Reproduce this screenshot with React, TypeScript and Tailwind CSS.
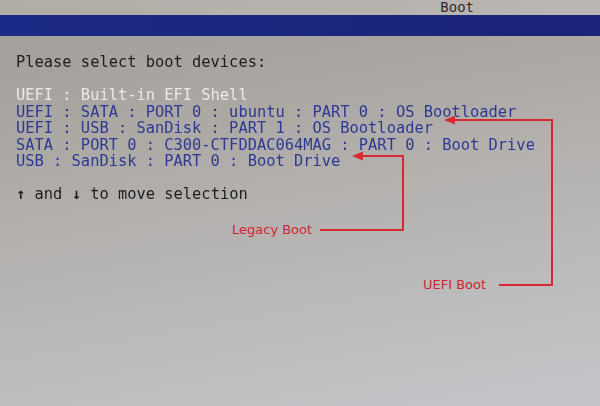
import React from 'react';

const mono = { fontFamily: '"DejaVu Sans Mono", "Liberation Mono", monospace' };

type Entry = { text: string; tone: 'white' | 'blue' };

const entries: Entry[] = [
  { text: 'UEFI : Built-in EFI Shell', tone: 'white' },
  { text: 'UEFI : SATA : PORT 0 : ubuntu : PART 0 : OS Bootloader', tone: 'blue' },
  { text: 'UEFI : USB : SanDisk : PART 1 : OS Bootloader', tone: 'blue' },
  { text: 'SATA : PORT 0 : C300-CTFDDAC064MAG : PART 0 : Boot Drive', tone: 'blue' },
  { text: 'USB : SanDisk : PART 0 : Boot Drive', tone: 'blue' },
];

function Callouts() {
  return (
    <>
      <svg className="absolute inset-0 pointer-events-none" width={600} height={406}>
        <g stroke="#d62a30" strokeWidth={2} fill="none">
          <polyline points="499,285 552,285 552,120 454,120" />
          <polyline points="320,230 403,230 403,156 362,156" />
        </g>
        <g fill="#d62a30">
          <polygon points="444,120 455,115.5 455,124.5" />
          <polygon points="352,156 363,151.5 363,160.5" />
        </g>
      </svg>
      <span
        className="absolute left-[232px] top-[221px] text-[13px] leading-[18px] text-[#d0262e]"
        style={{ fontFamily: '"DejaVu Sans", sans-serif' }}
      >
        Legacy Boot
      </span>
      <span
        className="absolute left-[423px] top-[276px] text-[13px] leading-[18px] text-[#d0262e]"
        style={{ fontFamily: '"DejaVu Sans", sans-serif' }}
      >
        UEFI Boot
      </span>
    </>
  );
}

export default function App() {
  return (
    <div className="relative w-[600px] h-[406px] overflow-hidden flex flex-col bg-[linear-gradient(170deg,#a19c96_0%,#aca8a4_30%,#b8b6b5_60%,#c5c4c9_100%)]">
      <div className="h-[15px] bg-[linear-gradient(90deg,#b0aca6,#bbb8b4)] flex justify-end pr-[126px]">
        <span className="text-[14px] leading-[15px] text-[#2c2c2c]" style={mono}>
          Boot
        </span>
      </div>
      <div className="h-[21px] bg-[linear-gradient(90deg,#1b2a86,#1a2478)]" />

      <div className="pt-[18px] pl-[16px] text-[15.4px] leading-[16.5px] blur-[0.3px]" style={mono}>
        <div className="text-[#1e1e1e]">Please select boot devices:</div>
        <div className="h-[16.5px]" />
        {entries.map((e) => (
          <div
            key={e.text}
            className={e.tone === 'white' ? 'text-[#ebe9ec]' : 'text-[#2c3a94]'}
          >
            {e.text}
          </div>
        ))}
        <div className="h-[16px]" />
        <div className="text-[#1e1e1e]">
          <span className="font-bold">↑</span> and <span className="font-bold">↓</span> to move selection
        </div>
      </div>

      <Callouts />
    </div>
  );
}
